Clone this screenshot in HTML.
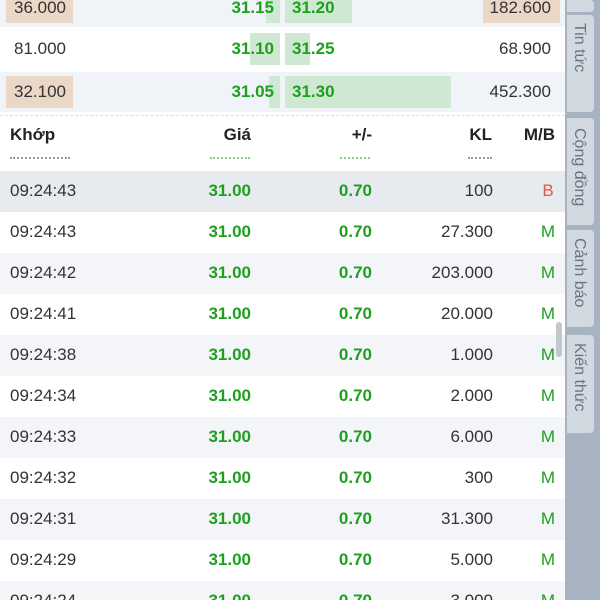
<!DOCTYPE html><html><head><meta charset="utf-8"><style>
*{margin:0;padding:0;box-sizing:border-box}
html,body{width:600px;height:600px;overflow:hidden}
body{background:#fff;font-family:"Liberation Sans",sans-serif;font-size:17px;color:#333;position:relative}
.a{position:absolute}
.g{color:#1ea01e;font-weight:bold}
.r{text-align:right}
.side{left:565px;top:0;width:35px;height:600px;background:#a8b3c1}
.tab{left:567px;width:27px;background:#d3d9e1;border-radius:0 4px 4px 0;overflow:hidden}
.vt{position:absolute;left:3px;writing-mode:vertical-rl;color:#6a7380;font-size:16px;white-space:nowrap}
</style></head><body>
<div class="a" style="left:0;top:0;width:565px;height:27px;background:#f0f3f7"></div>
<div class="a" style="left:0;top:72px;width:565px;height:40px;background:#f0f3f7"></div>
<div class="a" style="left:6px;top:0;width:67px;height:23px;background:#ead7c6"></div>
<div class="a" style="left:483px;top:0;width:77px;height:23px;background:#ead7c6"></div>
<div class="a" style="left:6px;top:76px;width:67px;height:32px;background:#ead7c6"></div>
<div class="a" style="left:266px;top:0;width:14px;height:23px;background:#cfe8d1"></div>
<div class="a" style="left:285px;top:0;width:67px;height:23px;background:#cfe8d1"></div>
<div class="a" style="left:250px;top:33px;width:30px;height:32px;background:#cfe8d1"></div>
<div class="a" style="left:285px;top:33px;width:25px;height:32px;background:#cfe8d1"></div>
<div class="a" style="left:269px;top:76px;width:11px;height:32px;background:#cfe8d1"></div>
<div class="a" style="left:285px;top:76px;width:166px;height:32px;background:#cfe8d1"></div>
<div class="a" style="left:14px;top:-2px">36.000</div>
<div class="a" style="left:14px;top:39px">81.000</div>
<div class="a" style="left:14px;top:82px">32.100</div>
<div class="a g r" style="left:200px;width:74px;top:-2px">31.15</div>
<div class="a g r" style="left:200px;width:74px;top:39px">31.10</div>
<div class="a g r" style="left:200px;width:74px;top:82px">31.05</div>
<div class="a g" style="left:292px;top:-2px">31.20</div>
<div class="a g" style="left:292px;top:39px">31.25</div>
<div class="a g" style="left:292px;top:82px">31.30</div>
<div class="a r" style="left:430px;width:121px;top:-2px">182.600</div>
<div class="a r" style="left:430px;width:121px;top:39px">68.900</div>
<div class="a r" style="left:430px;width:121px;top:82px">452.300</div>
<div class="a" style="left:0;top:115px;width:565px;border-top:1px dashed #d8dde3"></div>
<div class="a" style="left:10px;top:125px;font-weight:bold;color:#222">Khớp</div>
<div class="a r" style="left:180px;width:71px;top:125px;font-weight:bold;color:#222">Giá</div>
<div class="a r" style="left:300px;width:72px;top:125px;font-weight:bold;color:#222">+/-</div>
<div class="a r" style="left:420px;width:72px;top:125px;font-weight:bold;color:#222">KL</div>
<div class="a r" style="left:500px;width:55px;top:125px;font-weight:bold;color:#222">M/B</div>
<div class="a" style="left:10px;top:157px;width:60px;height:4px;border-top:2px dotted #999"></div>
<div class="a" style="left:210px;top:157px;width:40px;height:4px;border-top:2px dotted #8c8"></div>
<div class="a" style="left:340px;top:157px;width:30px;height:4px;border-top:2px dotted #8c8"></div>
<div class="a" style="left:468px;top:157px;width:24px;height:4px;border-top:2px dotted #999"></div>
<div id="rows"></div>
<script>
var d=[["09:24:43","100","B"],["09:24:43","27.300","M"],["09:24:42","203.000","M"],["09:24:41","20.000","M"],["09:24:38","1.000","M"],["09:24:34","2.000","M"],["09:24:33","6.000","M"],["09:24:32","300","M"],["09:24:31","31.300","M"],["09:24:29","5.000","M"],["09:24:24","3.000","M"]];
var h="";d.forEach(function(r,i){var t=171+i*41;var bg=i==0?"#e7eaee":(i%2?"#fff":"#f3f5f8");
h+='<div class="a" style="left:0;top:'+t+'px;width:565px;height:41px;background:'+bg+'"></div>';
var y=t+10;
h+='<div class="a" style="left:10px;top:'+y+'px">'+r[0]+'</div>';
h+='<div class="a g r" style="left:160px;width:91px;top:'+y+'px">31.00</div>';
h+='<div class="a g r" style="left:300px;width:72px;top:'+y+'px">0.70</div>';
h+='<div class="a r" style="left:380px;width:113px;top:'+y+'px">'+r[1]+'</div>';
h+='<div class="a" style="left:536px;width:24px;text-align:center;top:'+y+'px;color:'+(r[2]=="B"?"#e05a4a":"#1ea01e")+'">'+r[2]+'</div>';});
document.getElementById("rows").innerHTML=h;
</script>
<div class="a" style="left:556px;top:322px;width:6px;height:35px;background:#c3c7cc;border-radius:3px"></div>
<div class="a side"></div>
<div class="a tab" style="top:0;height:12px"></div>
<div class="a tab" style="top:15px;height:97px"><span class="vt" style="top:8px">Tin tức</span></div>
<div class="a tab" style="top:118px;height:107px"><span class="vt" style="top:10px">Cộng đồng</span></div>
<div class="a tab" style="top:230px;height:97px"><span class="vt" style="top:8px">Cảnh báo</span></div>
<div class="a tab" style="top:335px;height:98px"><span class="vt" style="top:8px">Kiến thức</span></div>
</body></html>
